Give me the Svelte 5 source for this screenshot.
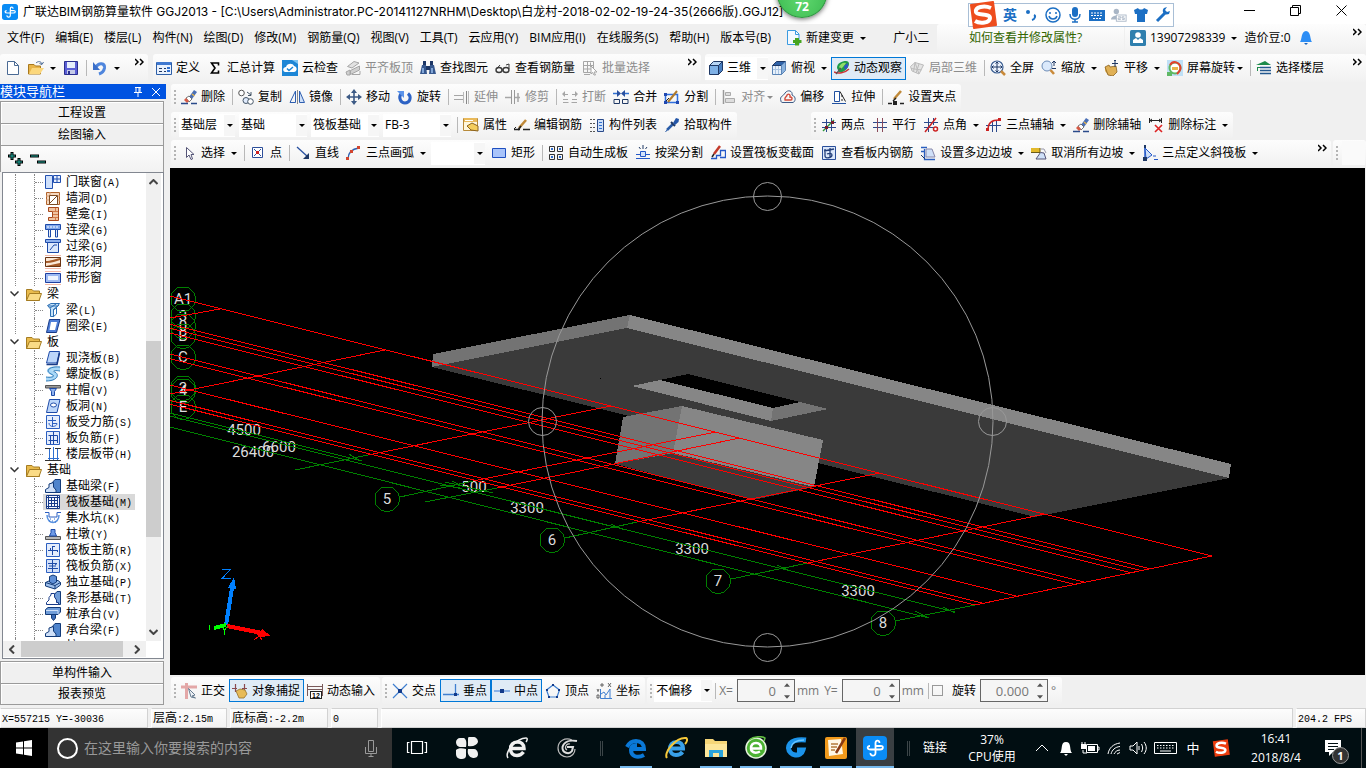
<script>
const menus = ['文件(F)', '编辑(E)', '楼层(L)', '构件(N)', '绘图(D)', '修改(M)', '钢筋量(Q)', '视图(V)', '工具(T)', '云应用(Y)', 'BIM应用(I)', '在线服务(S)', '帮助(H)', '版本号(B)']

// toolbar entries: icon, text, caret ('wide' | 'tight'), off = disabled, on = pressed
const sep = { sep: true }
const fileBar = [
  { icon: 'new', title: '新建' },
  { icon: 'open', title: '打开', caret: 'wide' },
  { icon: 'save', title: '保存' },
  sep,
  { icon: 'undo', title: '撤销', caret: 'wide' },
]
const mainBar = [
  { icon: 'define', text: '定义' },
  { icon: 'sum', text: '汇总计算' },
  { icon: 'cloud', text: '云检查' },
  { icon: 'alignTop', text: '平齐板顶', off: true },
  { icon: 'find', text: '查找图元' },
  { icon: 'glasses', text: '查看钢筋量' },
  { icon: 'batch', text: '批量选择', off: true },
]
const viewBar = [
  { icon: 'topView', text: '俯视', caret: 'wide' },
  { icon: 'orbit', text: '动态观察', on: true },
  { icon: 'part3d', text: '局部三维', off: true },
  sep,
  { icon: 'fit', text: '全屏' },
  { icon: 'zoom', text: '缩放', caret: 'wide' },
  { icon: 'pan', text: '平移', caret: 'wide' },
  { icon: 'spin', text: '屏幕旋转', caret: 'tight' },
  sep,
  { icon: 'floors', text: '选择楼层' },
]
const editBar = [
  { icon: 'brush', text: '删除' },
  sep,
  { icon: 'copy', text: '复制' },
  { icon: 'mirror', text: '镜像' },
  sep,
  { icon: 'move', text: '移动' },
  { icon: 'rotate', text: '旋转' },
  sep,
  { icon: 'extend', text: '延伸', off: true },
  { icon: 'trim', text: '修剪', off: true },
  sep,
  { icon: 'break', text: '打断', off: true },
  { icon: 'join', text: '合并' },
  { icon: 'split', text: '分割' },
  sep,
  { icon: 'align', text: '对齐', caret: 'tight', off: true },
  { icon: 'offset', text: '偏移' },
  { icon: 'stretch', text: '拉伸' },
  sep,
  { icon: 'grip', text: '设置夹点' },
]
const partCombos = [
  { label: '楼层', value: '基础层', width: 56 },
  { label: '构件类型', value: '基础', width: 68 },
  { label: '构件', value: '筏板基础', width: 68 },
  { label: '构件名称', value: 'FB-3', width: 68 },
]
const partBar = [
  sep,
  { icon: 'props', text: '属性' },
  { icon: 'editBar', text: '编辑钢筋' },
  { icon: 'list', text: '构件列表' },
  { icon: 'pick', text: '拾取构件' },
]
const axisBar = [
  { icon: 'twoPoint', text: '两点' },
  { icon: 'parallel', text: '平行' },
  { icon: 'angle', text: '点角', caret: 'wide' },
  { icon: 'axis3', text: '三点辅轴', caret: 'wide' },
  { icon: 'brush', text: '删除辅轴' },
  { icon: 'delDim', text: '删除标注', caret: 'wide' },
]
const drawBar = [
  { icon: 'pointer', text: '选择', caret: 'wide' },
  sep,
  { icon: 'point', text: '点' },
  sep,
  { icon: 'line', text: '直线' },
  { icon: 'arc', text: '三点画弧', caret: 'wide' },
]
const slabBar = [
  { icon: 'rect', text: '矩形' },
  sep,
  { icon: 'autoSlab', text: '自动生成板' },
  { icon: 'beamSplit', text: '按梁分割' },
  { icon: 'section', text: '设置筏板变截面' },
  { icon: 'viewBars', text: '查看板内钢筋' },
  { icon: 'slope', text: '设置多边边坡', caret: 'wide' },
  { icon: 'noSlope', text: '取消所有边坡', caret: 'wide' },
  { icon: 'tilt', text: '三点定义斜筏板', caret: 'wide' },
]
const modeBar = [
  { icon: 'ortho', text: '正交' },
  { icon: 'snap', text: '对象捕捉', on: true },
  { icon: 'dynInput', text: '动态输入' },
]
const snapBar = [
  { icon: 'cross', text: '交点' },
  { icon: 'perp', text: '垂点', on: true },
  { icon: 'mid', text: '中点', on: true },
  { icon: 'vertex', text: '顶点' },
  { icon: 'coord', text: '坐标' },
]

const tree = [
  { leaves: [['doorWin', '门联窗', 'A'], ['wallHole', '墙洞', 'D'], ['niche', '壁龛', 'I'], ['coupling', '连梁', 'G'], ['lintel', '过梁', 'G'], ['bandHole', '带形洞'], ['bandWin', '带形窗']] },
  { name: '梁', leaves: [['beam', '梁', 'L'], ['ring', '圈梁', 'E']] },
  { name: '板', leaves: [['slab', '现浇板', 'B'], ['spiral', '螺旋板', 'B'], ['cap', '柱帽', 'V'], ['slabHole', '板洞', 'N'], ['mainBars', '板受力筋', 'S'], ['negBars', '板负筋', 'F'], ['strip', '楼层板带', 'H']] },
  { name: '基础', leaves: [['foundBeam', '基础梁', 'F'], ['raft', '筏板基础', 'M'], ['pit', '集水坑', 'K'], ['pier', '柱墩', 'Y'], ['raftMain', '筏板主筋', 'R'], ['raftNeg', '筏板负筋', 'X'], ['isolated', '独立基础', 'P'], ['stripFound', '条形基础', 'T'], ['pileCap', '桩承台', 'V'], ['foundBeam', '承台梁', 'F'], ['pier', '桩', 'U']] },
]
let selected = $state('筏板基础')

// canvas geometry
const SLOPE = 0.2495
const longAxes = [[1212, 556], [1151, 569], [1143, 571], [1132, 573], [1084, 582], [1073, 584], [1016, 596], [982, 603], [975, 605]]
const crossAxes = [
  [220, 309, 170, 318], [385, 350, 170, 394], [611, 406, 368, 455], [716, 432, 473, 481],
  [740, 438, 497, 488], [880, 473, 637, 522], [1045, 514, 808, 563], [1212, 556, 975, 605],
]
const greenLines = [
  [368, 455, 295, 470], [473, 481, 400, 497], [497, 488, 425, 502], [637, 522, 565, 538],
  [808, 563, 731, 579], [975, 605, 895, 621], [170, 413, 362, 461], [170, 416, 955, 612],
  [170, 427, 929, 618], [445, 482, 493, 493], [349, 454, 360, 461], [440, 485, 460, 488], [452, 481, 464, 487],
  [611, 524, 624, 530], [777, 565, 790, 571], [943, 607, 955, 613], [915, 611, 929, 618],
]
const bubbles = [
  ['A1', 183, 299], ['3', 183, 316], ['0', 183, 326], ['B', 183, 336], ['C', 183, 357], ['2', 183, 388],
  ['4', 183, 391], ['E', 183, 407], ['5', 387, 499], ['6', 552, 540], ['7', 718, 581], ['8', 883, 623],
]
const dims = [['4500', 244, 430], ['6600', 279, 447], ['26400', 253, 452], ['500', 474, 487], ['3300', 527, 508], ['3300', 692, 549], ['3300', 858, 591]]
const handles = [[767, 196], [767, 647], [542, 421], [992, 421]]

function octagon(x, y) {
  const pts = []
  for (let i = 0; i < 12; i++) {
    const a = (i * Math.PI) / 6
    pts.push(`${Math.round(x + 12.5 * Math.sin(a))},${Math.round(y + 12.5 * Math.cos(a))}`)
  }
  return pts.join(' ')
}

const N = '#1f3864'
const B = '#2f6fd0'
const G = '#a6a6a6'
const s = (d, c = N, w = 1) => `<path d="${d}" fill="none" stroke="${c}" stroke-width="${w}"/>`
const f = (d, c) => `<path d="${d}" fill="${c}"/>`
const fs = (d, c, k) => `<path d="${d}" fill="${c}" stroke="${k}"/>`

const icons = {
  new: fs('M2.500 1.500H9.500L13.500 5.500V14.500H2.500Z', '#fff', '#4a6a94') + s('M9.500 1.500V5.500H13.500', '#4a6a94'),
  open: fs('M.5 4.500H6L7.500 6H12.500V14H.5Z', '#e8b54a', '#a8781c') + f('M1 14L4 8H16L12 14Z', '#fbd77c') + s('M8 3C10 1 13 1 14 4M15.500 2L14 4.500L11.500 3.500', '#4a6a94'),
  save: fs('M1.500 1.500H14.500V14.500H1.500Z', '#5b5fd6', '#2b2f8e') + f('M4 2H12V8H4Z', '#e6eefc') + f('M4 10H12V14H4Z', '#c5cbe8') + f('M5 11H7V14H5Z', '#2b2f8e'),
  undo: s('M4 7C7 2 13 3 12.500 8C12 11 10 13 7 14', '#4f86dd', 3) + f('M1 2V10H8Z', '#3b6fc9'),
  define: fs('M.5 2.500H15.500V14.500H.5Z', '#e9f1fd', '#2d5fa8') + f('M1 2H15V5H1Z', '#3f78d0') + s('M3 8.500H6M3 11.500H6M8 8.500H10M8 11.500H10', N) + f('M11 7H14V9H11ZM11 10H14V12H11Z', B),
  sum: s('M11.500 5.500V3H4.500L8 8L4.500 13H11.500V10.500', '#000', 1.600),
  cloud: f('M0 0H16V16H0Z', '#1d86d6') + f('M3 12C0 11 1 7 4 7C5 3 11 3 12 6C16 7 15 12 12 12Z', '#fff') + s('M5 8.500L7 10.500L11 7', '#1d86d6', 1.500) + f('M10 0H16V4Z', '#7cc4f2'),
  alignTop: fs('M2.500 6.500L9 1.500L14 3L7 8Z', '#e2e2e2', G) + fs('M5.500 10.500L14.500 6V10L5.500 14.500ZM1 12L5 10V15H2Z', '#d0d0d0', G) + s('M7 14.500H15V11', G),
  find: f('M2 5H6L7 14H0Z', '#36588f') + f('M10 5H14L16 14H9Z', '#36588f') + f('M3 1H6V5H3ZM10 1H13V5H10ZM6 6H10V10H6Z', '#1c3666') + s('M3 8V13M12 8V13', '#9cc0f0', 1.500),
  glasses: `<ellipse cx="4" cy="10" rx="3" ry="2.500" fill="none" stroke="#3a3a3a" stroke-width="1.400"/><ellipse cx="11" cy="10" rx="3" ry="2.500" fill="none" stroke="#3a3a3a" stroke-width="1.400"/>` + s('M7 10H8M1.500 9L5 5M14 9V4L11 5', '#3a3a3a'),
  batch: s('M1.500 1.500H11.500V12.500H1.500ZM1.500 5.500H11.500M1.500 9H11.500M5.500 1.500V12.500M8.500 2.500V7', G) + fs('M9 6L15 12L12 12L13.500 15L12 15L10.500 12.500L9 14Z', '#fff', G) + s('M2 14.500H8', G),
  cube: fs('M1.500 5.500H10.500V14.500H1.500Z', '#7fb1e6', N) + fs('M1.500 5.500L5.500 1.500H14.500L10.500 5.500Z', '#b8d6f5', N) + fs('M10.500 5.500L14.500 1.500V10.500L10.500 14.500Z', '#4a7fc0', N),
  topView: fs('M1.500 5.500H10.500V14.500H1.500Z', '#e8f1fb', '#5b84b5') + fs('M1.500 5.500L5.500 1.500H15L10.500 5.500Z', '#2f62a8', N) + fs('M10.500 5.500L14.500 1.500V10.500L10.500 14.500Z', '#8cb3de', '#5b84b5') + s('M4.500 6V14M7.500 6V14M2 9.500H10', '#a9c4e2'),
  orbit: f('M3 8C3 3 8 1 12 1C15 1 16 4 14 7C12 11 8 13 5 12Z', '#1d9a4a') + f('M5 7C6 4 9 2 12 3C11 5 9 7 7 9Z', '#8fdc6a') + f('M10 6L14 3V7L11 10Z', '#2f52c4') + s('M0 12C4 14 11 13 15 9', '#c33', 1.500) + s('M2 14L7 8', '#555', 1.200),
  part3d: fs('M1.500 6.500L6 2.500L14.500 5L10 14L3 11Z', '#e4e4e4', '#bbb') + s('M6 2.500L4.500 12M10 4L7 13M2 8.500L12.500 10M6 2.500L10 14', '#bbb'),
  fit: `<circle cx="7" cy="7" r="6" fill="#eef5ff" stroke="#3c5f92" stroke-width="1.200"/>` + s('M7 2V12M2 7H12M5.500 3.500L7 2L8.500 3.500M5.500 10.500L7 12L8.500 10.500M3.500 5.500L2 7L3.500 8.500M10.500 5.500L12 7L10.500 8.500', N) + s('M11 11L15 15', '#c98a3a', 2.500),
  zoom: `<circle cx="6" cy="6" r="5" fill="#dbe9fb" stroke="#6d8db8"/>` + s('M9.500 10L13 14', '#c98a3a', 2.500) + s('M13 1V6M11 3L13 1L15 3M11 8.500H15', N),
  pan: f('M1 7L5 5L6 7L12 6L13 12L9 16L4 15L1 11Z', '#e0b055') + s('M1 7L5 5L6 7L12 6L13 12L9 16L4 15Z', '#8a6220', .800) + s('M11 0V7M8 3.500H14M10 1L11 0L12 1', N),
  spin: f('M0 0H16V16H0Z', '#bfe0f6') + `<circle cx="8" cy="8" r="5.500" fill="#fff" stroke="#5fb865" stroke-width="2"/>` + s('M3 5C6 0 13 2 13.500 8C13.500 10 12 12 10 14', '#e2402c', 2) + f('M5 7H11V10H5Z', '#e8b54a') + f('M0 12H5V16H0Z', '#5fb865'),
  floors: f('M0 5L9 1L15 5Z', '#1c8a4a') + s('M4 7.500H15M4 10.500H15M4 13.500H15', '#23588f', 1.500) + s('M1.500 7.500H4M1.500 7V11', '#1c8a4a'),
  brush: f('M8 8L13 1L16 3L11 10Z', '#4a6fb5') + f('M5 9L8 7L11 10L8 13Z', '#fff') + s('M5 9L8 7L11 10L8 13Z', '#555', .800) + f('M5 9L8 12L6 14L3 11Z', '#d65a45') + s('M0 14.500H7M10 14.500H16', '#2a4a8a', 1.500) + s('M11 5L13.500 7', '#e8b54a', 1.500),
  copy: `<circle cx="3.500" cy="4" r="2.800" fill="#fff" stroke="#555"/><circle cx="8" cy="11.500" r="3" fill="#dfeafc" stroke="#456"/><circle cx="12.500" cy="12.500" r="2.800" fill="#fff" stroke="#456"/>` + s('M9 3L13 6M13 3V6.500H10', '#456'),
  mirror: s('M6.500 2V13.500H1Z', '#2f5fb0') + s('M8.500 1V15', '#888') + fs('M10.500 2V13.500H15.500Z', '#cfe0f8', '#2f5fb0'),
  move: s('M8 2V14M2 8H14', '#3c5a85', 1.600) + f('M8 0L11 4H5ZM8 16L11 12H5ZM0 8L4 5V11ZM16 8L12 5V11Z', '#3c5a85'),
  rotate: s('M4 5C1 9 4 14 8 14C13 14 15 8 11 4.500', '#2d62c4', 3) + f('M0 2H7V9Z', '#5b93ea'),
  extend: s('M0 6.500H9M0 10.500H9', G) + s('M12.500 2V15', '#888') + s('M9.500 3V14M14.500 2V15', '#bbb'),
  trim: s('M6.500 1V15M9.500 1V15', '#999') + s('M0 8.500H6M10 8.500H15M13 4V13', G, 1.500),
  break: s('M1 5.500H6M10 5.500H15M1 13.500H6.500M9.500 13.500H15M1 10.500H6M10 10.500H15', G, 1.200) + f('M3 2V8L0 5ZM13 2V8L16 5Z', G),
  join: s('M0 4.500H5M11 4.500H16', B, 1.500) + f('M4 1V8L8 4.500ZM12 1V8L8 4.500Z', '#2850a0') + s('M1 10.500H6.500V14.500H1ZM15 10.500H9.500V14.500H15Z', N),
  split: s('M1.500 5.500H13.500V13.500H1.500Z', '#2f6fe0', 1.500) + s('M4 13L13 2', '#b07a2a', 2) + s('M1 13L5 9', '#222') + f('M0 12H3V15H0ZM12 12H15V15H12ZM0 4H3V7H0Z', '#2048b0'),
  align: s('M2.500 1V15', '#999', 1.500) + fs('M4.500 3.500H9.500V6.500H4.500ZM4.500 9.500H13.500V13.500H4.500Z', '#ddd', '#aaa'),
  offset: s('M1 12C-1 7 4 7 5 4C8 0 13 2 12 6C17 8 15 13 13 13.500H3C1.500 13.500 1 13 1 12Z', '#3c5a85') + s('M5 11C4 8 7 8 7 6C9 4 10.500 6 10 8C13 8 12 11 11 11Z', '#d24a3a', 1.400),
  stretch: fs('M3.500 2.500H8.500V12.500H3.500Z', '#fff', '#2050a0') + s('M9 2.500L14.500 12.500', '#222') + s('M1 14.500H15', '#2050a0') + s('M11 6V8M11 10V12', '#222'),
  grip: s('M6 10L13 2', '#c08a3a', 2.500) + s('M5 12L8 9', '#222', 1.500) + s('M0 14.500H4M12 14.500H16', '#222', 1.500) + f('M5 12H9V16H5Z', '#222'),
  props: fs('M.5 1.500H14.500V13.500H.5Z', '#fff7dd', '#b78a3a') + f('M1 1H14V5H1Z', '#e9b95a') + s('M2 3.500H10', '#fff') + fs('M4 9L9 6L15 9V14L8 13Z', '#f4cd5c', '#8a6220'),
  editBar: s('M0 12.500H6M9 12.500H16', '#222', 1.500) + s('M5 11L12 3', '#c08a3a', 2.500) + s('M4 13L7 9', '#222', 1.500) + s('M2 10L0 12', '#222'),
  list: s('M1 2.500H3M1 6.500H3M1 10.500H3M1 14.500H3M4 2.500H6M4 6.500H6M4 10.500H6M4 14.500H6', '#555') + fs('M8.500 2.500H14.500V14.500H8.500Z', '#cfe0f8', '#2a4a8a') + s('M10 5.500H13M10 8.500H13M10 11.500H13', B),
  pick: s('M3 13L9 7', '#2a5ca8', 2.500) + s('M1.500 15L3 13', '#2a5ca8') + s('M7 5L11 9', N, 2) + f('M9 6L12 1L15 2L14.500 5L11 8Z', '#2456a8'),
  twoPoint: s('M1 5.500H15M1 10.500H15M5.500 2V15M10.500 1V14', '#2c4a8c') + s('M2 14L13 3', '#2f9a3a', 1.500) + f('M4 9H7V12H4ZM10 4H13V7H10Z', '#7a1f2a'),
  parallel: s('M1 5.500H15M1 10.500H15', '#2c4a8c', 1.200) + s('M5.500 1V15M10.500 1V15', '#8a4a5a'),
  angle: s('M1 5.500H15M1 10.500H15M5.500 1V15M10.500 1V8', '#2c4a8c') + s('M2 15L13 1', '#c22', 1.500) + `<circle cx="12.500" cy="12" r="2" fill="#fff" stroke="#c22" stroke-width="1.500"/>`,
  axis3: s('M6.500 4V15M10.500 3V15M0 8.500H15', '#2c4a8c') + s('M2 12C2 6 6 3 13 3', '#c22', 1.300) + f('M12 1H15V4H12ZM0 11H3V14H0Z', '#c22'),
  delDim: s('M1.500 1V6M13.500 1V6M2 3.500H13M4 2L2 3.500L4 5M11 2L13 3.500L11 5', '#222') + s('M7 8L14 15M14 8L7 15', '#d22', 1.600),
  pointer: fs('M5.500 2.500V12.500L8 10L10 14.500L11.500 14L10 9.500H13Z', '#fff', '#557'),
  point: fs('M2.500 2.500H12.500V12.500H2.500Z', '#fff', '#2d4f9a') + s('M4 4L11 11M11 4L4 11', '#2d4f9a') + f('M6 6H9V9H6Z', '#c22'),
  line: s('M2 2L13 12', '#2850a0', 1.300) + f('M14 14V8L8 14Z', N),
  arc: s('M2 14C2 8 6 4 13 3', '#3060b0', 1.300) + f('M11 1H14V4H11ZM4 5H7V8H4ZM0 12H3V15H0Z', '#d2452e'),
  rect: fs('M1.500 3.500H14.500V12.500H1.500Z', '#a9c4fa', '#1f4fc0'),
  autoSlab: s('M1.500 1.500H6.500V6.500H1.500ZM9.500 1.500H14.500V6.500H9.500ZM1.500 9.500H6.500V14.500H1.500ZM9.500 9.500H14.500V14.500H9.500Z', '#333') + f('M3 3H5V5H3ZM11 3H13V5H11ZM3 11H5V13H3ZM11 11H13V13H11Z', B),
  beamSplit: s('M1 9.500H5M11 9.500H15M1 13.500H15', '#2458c8', 1.200) + fs('M5.500 6.500H10.500V11.500H5.500Z', '#d3e2fa', '#2458c8') + s('M8 0V4M4 2L5.500 4M12 2L10.500 4', N),
  section: s('M1 13.500H6.500V10.500H10.500V5.500H15.500V12.500H10', '#2458c8', 1.300) + s('M4 9L10 1', '#c33a2a', 2.500) + s('M2 12L4 9', '#222', 1.500),
  viewBars: fs('M1.500 1.500H14.500V14.500H1.500Z', '#dce8fb', '#2a4f9a') + s('M4 4V11C4 14 11 13 11 10C11 8 8 8 6 9M3 6L13 4M9 3V12', '#233f7a', 1.300),
  slope: s('M1 6.500H5M4.500 4V14.500H15M1 2.500H7', '#2a5fc0', 1.300) + fs('M6 4L12 4L15 12H6Z', '#cfe0f8', '#88a') + s('M1 10L5 14', N),
  noSlope: f('M0 3H9V7H0Z', '#e2b92c') + s('M0 7.500H9V3', '#6a5a1a') + fs('M9.500 7.500L13 8L15 14H5Z', '#cfe0f8', '#557') + s('M10 4L13 4L15 8', '#99a'),
  tilt: s('M3 1V14', '#2458c8', 1.500) + fs('M3 3L10 10L4 14Z', '#cfe0f8', '#2458c8') + f('M1 12H5V16H1Z', N) + s('M11 11H14M12 14.500H16', '#2458c8', 1.200) + f('M2 0H4V3H2Z', N),
  ortho: s('M0 4H16M5.500 0V16', '#e3a7a7', 3) + fs('M7.500 5.500L14 12L11 13L14.500 15L10 14Z', '#eef2f7', '#667b90'),
  snap: s('M3.500 1V9M12.500 1V9M0 5.500H5M10 5.500H15', '#8a4a50', 1.200) + f('M4 8L8 6L13 7L15 11L12 15L7 15Z', '#e7bb58') + s('M4 8L8 6L13 7L15 11L12 15L7 15Z', '#94702a', .800),
  dynInput: s('M.5 1V13M15.500 1V13M1 3.500H15M1 6.500H15', '#7a5a5a') + `<rect x="3.500" y="8.500" width="11" height="7" fill="#fff" stroke="#222"/><text x="9" y="15" font-size="7" font-weight="700" text-anchor="middle" font-family="Liberation Sans, sans-serif">12</text>`,
  cross: s('M1 1L15 15M15 1L1 15', '#3f7fd0', 1.200) + f('M6 6H10V10H6Z', '#123a8a'),
  perp: s('M0 11.500H16M12.500 1V12', '#3f7fd0', 1.300) + f('M11 10H14V13H11Z', '#123a8a'),
  mid: s('M0 8H16', '#6f9fe0', 1.500) + f('M6 6H10V10H6Z', '#123a8a'),
  vertex: s('M8 2L14.500 7L12 14H4L1.500 7Z', '#3f7fd0', 1.200) + f('M7 1H9V3H7ZM13 6H15V8H13ZM1 6H3V8H1ZM3 13H5V15H3ZM11 13H13V15H11Z', '#123a8a'),
  coord: s('M4.500 6V15.500H16M5 11L8 9L10 12L14 6V15M9 12V15', '#3f7fd0') + s('M1 6L2 8L3 6M2 8V9M12 0L15 4M15 0L12 4M1 12H3V15H1ZM5 1H7V3H5Z', '#444', .800),
  folder: fs('M.5 3.500H6L7.500 5H13.500V14.500H.5Z', '#e9bb4d', '#a57c22') + fs('M.5 14.500L3.500 7.500H15.500L13 14.500Z', '#fadb86', '#a57c22'),
  doorWin: fs('M.5 1.500H7.500V14.500H.5Z', '#cfe0fb', '#2250b0') + fs('M8.500 1.500H15.500V8.500H8.500Z', '#e8f0fd', '#2250b0') + s('M12 1.500V8.500M8.500 5H15.500', '#2250b0'),
  wallHole: fs('M1.500 2.500H14.500V14.500H1.500Z', '#f6d9c0', '#b0622a') + s('M1 6H15M1 10H15M5 2V6M10 10V14', '#d69a70') + fs('M4.500 5.500H12.500V14.500H4.500Z', '#fff', '#7a4a22') + s('M4 14L12 6', '#7a4a22'),
  niche: fs('M3.500 1.500H13.500V14.500H3.500V11.500H7.500V5.500H3.500Z', '#f0c4a2', '#a8481c') + s('M8 5.500H13M10.500 2V5M8 8.500H13M8 11.500H13M10.500 12V14', '#d27a4a'),
  coupling: fs('M.5 2.500H15.500V7.500H.5Z', '#7fa6ea', '#1d4aa8') + fs('M3.500 7.500H5.500V15H3.500ZM10.500 7.500H12.500V15H10.500Z', '#e6effd', '#1d4aa8') + `<path d="M2 5H14" stroke="#fff" stroke-dasharray="2 1"/>`,
  lintel: fs('M.5 1.500H15.500V4.500H.5Z', '#8fb2ee', '#1d4aa8') + fs('M2.500 4.500H13.500V14.500H2.500Z', '#dbe8fc', '#1d4aa8') + s('M5 12L9 7H12', '#1d4aa8'),
  bandHole: s('M0 1.500H16M0 14.500H16', '#f3b8a8') + fs('M.5 3.500H15.500V12.500H.5Z', '#a65a28', '#6a3412') + f('M1 7C6 7 9 5 15 4H1ZM1 9C7 9 11 7 15 6L15 9L1 12Z', '#fbe9d8'),
  bandWin: s('M0 1.500H16M0 14.500H16', '#f3b8a8') + fs('M.5 3.500H15.500V12.500H.5Z', '#9db9f2', '#1d3fa0') + f('M3 6H13V10H3Z', '#eef4fe'),
  beam: fs('M2.500 3.500L6 1.500H14.500L11.500 5.500L8.500 8V14.500H5.500V7Z', '#c4e2fa', '#2c6fb4') + s('M3 4H12M5 6L11 2M8 8L14 3M11.500 6V12L8 15', '#2c6fb4'),
  ring: fs('M4.500 1.500H15L11.500 14.500H1.500Z', '#4f7fd8', '#173a88') + f('M6 4H12L10 12H4.500Z', '#fff'),
  slab: fs('M4.500 1.500H14.500L12 13H1.500Z', '#bcd6fa', '#1d4aa8') + s('M1.500 14.500H12L14.500 3', '#173a88', 1.500),
  spiral: s('M15 3C4 1 1 5 7 7C13 9 10 13 1 13', '#a9d8f7', 4) + s('M15 1C4 0 0 5 6 8C11 10 8 12 1 11M15 5C9 4 7 5 10 6C15 9 12 15 1 15', '#2d79b8'),
  cap: fs('M.5 3.500H15.500V6H.5Z', '#9a9a9a', '#555') + fs('M4.500 6.500H11.500L9.500 9.500V13.500H6.500V9.500Z', '#8fb2ee', '#1d4aa8'),
  slabHole: fs('M4.500 1.500H15L12 14.500H1.500Z', '#bcd6fa', '#1d4aa8') + `<ellipse cx="8.500" cy="7" rx="3" ry="2" fill="#fff" stroke="#1d4aa8"/>`,
  mainBars: fs('M1.500 1.500H14.500V14.500H1.500Z', '#e4edfc', '#2c5fc0') + s('M7.500 3V13M3 6.500H11M4 9C4 14 12 13 12 9.500H8', '#2c5fc0'),
  negBars: fs('M1.500 1.500H14.500V14.500H1.500Z', '#e4edfc', '#2c5fc0') + s('M3.500 5.500H12.500V13M3.500 10.500H12.500M5.500 5.500V14M8.500 2V14', '#1d4aa8'),
  strip: s('M0 2.500H6M10 2.500H16M0 14.500H16', '#333') + s('M4.500 3V14M8.500 1V14M12.500 3V14', B) + s('M3 12.500H14', B),
  foundBeam: fs('M6.500 5.500L10 1.500H15.500V14.500H6.500Z', '#4f84cc', '#123a78') + fs('M.5 14.500V11.500L4 9.500V6L8.500 4.500V9L11 12V14.500Z', '#cfe0f8', '#123a78'),
  raft: fs('M1.500 1.500H14.500V14.500H1.500Z', '#f4f8ff', '#173a88') + s('M3.500 1V15M12.500 1V15M1 3.500H15M1 12.500H15M6.500 4V12M9.500 4V12M4 6.500H12M4 9.500H12', '#173a88'),
  pit: s('M0 2.500H4V7H12V2.500H16', '#2c5fc0') + s('M2 5C2 15 14 15 14 5', '#5b93e0', 1.500) + s('M5 9H6M9 9H10M7 11H8M4 11H5M10 12H11', B),
  pier: fs('M.5 10.500H15.500V13.500H.5Z', '#b8b8b8', '#555') + fs('M4.500 10L6 6.500V3.500H10V6.500L11.500 10Z', '#6d9ae6', '#1d4aa8'),
  raftMain: fs('M1.500 1.500H14.500V14.500H1.500Z', '#e4edfc', '#2c5fc0') + s('M7.500 4V13M3 8.500H13M5.500 8V6M7 4.500H10M12.500 8V10', '#1d4aa8'),
  raftNeg: fs('M1.500 1.500H14.500V14.500H1.500Z', '#d3e1fa', '#2c5fc0') + s('M7.500 2V14M3 5.500H12L10 7M3 10.500H13M4 8H11', '#1d4aa8'),
  isolated: fs('M.5 8.500L5 6.500H13L15.500 8.500V11L10 15L.5 12Z', '#9fc0ec', '#123a78') + fs('M4.500 2.500L8 1L11.500 2.500V8L8 10L4.500 8Z', '#5f8fd6', '#123a78') + s('M.5 8.500L10 11.500L15.500 8.500M10 11.500V15', '#123a78'),
  stripFound: fs('M9 5L12 1.500H15.500V14.500H9Z', '#6f9cd8', '#123a78') + fs('M1.500 14.500V12.500L4 10V7.500L6 5V3.500H9.500V7L11.500 10V12.500H13.500V14.500Z', '#fff', '#173a88'),
  pileCap: fs('M.5 3.500L3 1.500H15.500V6L13 8.500H.5Z', '#6f9cd8', '#123a78') + s('M1 4.500H13V8', '#cfe0f8') + fs('M6.500 8.500H10.500V12L8.500 14.500L6.500 12Z', '#3c6cb8', '#123a78'),
  newChange: fs('M1.500 .5H9.500L13 4V14.500H1.500Z', '#f3f9ff', '#3a9be0') + s('M9.500 .5V4.500H13', '#3a9be0') + f('M9 8H13V10H15.500V13H13V15.500H9V13H7V10H9Z', '#46a520'),
  user: `<rect width="16" height="16" rx="1.500" fill="#2f7fae"/><circle cx="8" cy="5" r="2.800" fill="#fff"/>` + f('M3 13V10L6 8L8 10L10 8L13 10V13Z', '#fff'),
  bell: f('M2 12C4 10 3 1 8 1C13 1 12 10 14 12Z', '#2d8ef5') + f('M6 13H10L8 15Z', '#1864c0'),
  more: s('M0 1L3 4L0 7M5 1L8 4L5 7', '#000', 1.500),
}

const tasks = ['edge', 'ie', 'files', 'green', 'gblue', 'note']
const taskIcons = {
  view: s('M6.500 5.500H17.500V17.500H6.500ZM4.500 6.500H2.500V16.500H4.500M19.500 6.500H21.500V16.500H19.500', '#fff', 1.200),
  clover: f('M5 2H9C11 3 12 6 11 11H6C3 11 1 9 1 6C1 4 3 2 5 2ZM14 1H18C21 1 23 3 23 6C22 9 18 11 13 10V4C13 2 13 1 14 1ZM1 14C3 12 7 12 11 13V20C11 22 9 23 7 23C3 23 1 21 1 18ZM13 13H19C21 13 23 15 23 18C23 21 21 22 18 22C14 21 12 18 13 13Z', '#f0f0f0'),
  eWhite: s('M6 12.500H19C19 8 16 6 12.500 6C8 6 5.500 9 5.500 13C5.500 17 8 19.500 12 19.500C15 19.500 17 18 18.500 16', '#f0f0f0', 3.500) + s('M3 22C-1 16 12 2 21 2C23 2 22 5 21 6', '#f0f0f0', 1.500),
  gWhite: s('M17 4C10 1 3 5 3 12C3 18 8 21 12 21C17 21 20 17 20 13', '#bbb', 1.200) + s('M22 5C16 4 9 5 7.500 11C7 17 14 19 17 15L18 11H12', '#ddd', 2) + s('M15 8C11 7 9 12 12 14', '#ccc', 1.200),
  edge: s('M6 13H20C20 8 17 5 12 5C8 5 5 7 3 11', '#0a78d7', 4) + s('M20 19C13 23 7 20 7 14C7 10 10 9 13 9', '#0a78d7', 4),
  ie: s('M6 12.500H19C19 8 16 6 12.500 6C8 6 6 9 6 13C6 17 9 19 12 19C15 19 17 18 18.500 16', '#39a0e8', 4) + s('M3 22C-1 17 12 1 22 2C24 3 23 6 21 8', '#f5c83a', 2),
  files: f('M1 3H9L11 5H23V21H1Z', '#f6d678') + f('M1 8H23V21H1Z', '#fde69a') + f('M5 14H19V21H15V17H9V21H5Z', '#2aa4dc'),
  green: `<circle cx="12" cy="12" r="10" fill="#4cb233" stroke="#e8f5e0" stroke-width="1.500"/>` + s('M7 12.500H17C17 8 14 7 12 7C9 7 7 9 7 12.500C7 16 11 18 16 15.500', '#fff', 2.500) + s('M5 4C10 0 18 0 21 2L20 5', '#63c043', 1.500),
  gblue: s('M22 4C15 3 5 4 4.500 12C5 20 17 22 19 14H13', '#1b93ea', 5) + s('M20 4C14 4 8 6 7 12', '#69c4ff', 1.500),
  note: `<rect x="1" y="1" width="22" height="22" rx="2" fill="#f19a1c"/>` + f('M4 4L17 3L19 18L5 20Z', '#fff8e6') + s('M7 8H14M7 11H13M7 14H11', '#b47a3a', 1.500) + s('M12 17L21 2', '#8a3a12', 2.500),
  app: `<rect width="24" height="24" rx="4" fill="#0a8cf5"/>` + s('M12.500 11V17C12.500 21 7 20 7.500 17M12.500 13.500H8C3.500 13.500 4 10 7 10M12.500 13.500H17C21 13.500 20.500 9.500 17.500 10H12.500V7C12.500 4 16.500 3.500 16.500 7', '#fff', 1.800),
}
</script>

{#snippet icon(name)}
  <svg class="icon" viewBox="0 0 16 16" aria-hidden="true">{@html icons[name]}</svg>
{/snippet}

{#snippet big(name)}
  <svg class="big" viewBox="0 0 24 24" aria-hidden="true">{@html taskIcons[name]}</svg>
{/snippet}

{#snippet bar(items)}
  {#each items as item}
    {#if item.sep}
      <span class="sep"></span>
    {:else}
      <button class="tool" class:on={item.on} class:off={item.off} aria-label={item.text ?? item.title}>
        {@render icon(item.icon)}
        {#if item.text}<span class="text">{item.text}</span>{/if}
        {#if item.caret}<span class="caret {item.caret}"></span>{/if}
      </button>
    {/if}
  {/each}
{/snippet}

{#snippet combo(c)}
  <span class="combo" style="width: {c.width}px">
    {#if c.icon}{@render icon(c.icon)}{/if}
    <select aria-label={c.label}><option>{c.value}</option></select>
    <span class="drop"><span class="caret"></span></span>
  </span>
{/snippet}

{#snippet more()}
  <button class="more" aria-label="更多"><svg viewBox="0 0 9 8">{@html icons.more}</svg></button>
{/snippet}

{#snippet spin(id, value)}
  <span class="spin">
    <input {id} {value} />
    <svg viewBox="0 0 7 18" aria-hidden="true"><path d="M0 4L3.500 0L7 4ZM0 14L3.500 18L7 14Z" fill="#555" /></svg>
  </span>
{/snippet}

<div class="window">
  <header class="title">
    <svg class="icon" viewBox="0 0 24 24">{@html taskIcons.app}</svg>
    <h1>广联达BIM钢筋算量软件 GGJ2013 - [C:\Users\Administrator.PC-20141127NRHM\Desktop\白龙村-2018-02-02-19-24-35(2666版).GGJ12]</h1>
    <div class="winbtns">
      <button aria-label="最小化"><svg viewBox="0 0 11 11"><path d="M0 5.500H11" /></svg></button>
      <button aria-label="还原"><svg viewBox="0 0 11 11"><path d="M.5 2.500H8.500V10.500H.5ZM2.500 2.500V.5H10.500V8.500H8.500" /></svg></button>
      <button aria-label="关闭"><svg viewBox="0 0 11 11"><path d="M.5 .5L10.500 10.500M10.500 .5L.5 10.500" /></svg></button>
    </div>
    <div class="ball">72</div>
    <div class="ime">
      <svg class="sogou" viewBox="0 0 28 28"><path d="M2 4L24 1L27 24L5 27Z" fill="#ee4d1e" stroke="#ee4d1e" stroke-width="2" stroke-linejoin="round" /><path d="M22 7C15 4 6 6 7 11C8 15 21 12 21 17C21 22 11 23 6 20" fill="none" stroke="#fff" stroke-width="4" /></svg>
      <b>英</b>
      <svg viewBox="0 0 16 16"><circle cx="5" cy="5" r="2" fill="#1c6fc4" /><path d="M11 8C13 9 12 12 9 13" fill="none" stroke="#1c6fc4" stroke-width="2" /></svg>
      <svg viewBox="0 0 16 16"><circle cx="8" cy="8" r="7" fill="none" stroke="#1c6fc4" stroke-width="1.500" /><path d="M5 5V7M11 5V7M4 9C5 13 11 13 12 9" fill="none" stroke="#1c6fc4" stroke-width="1.500" /></svg>
      <svg viewBox="0 0 16 16"><rect x="5" y="0" width="6" height="10" rx="3" fill="#1c6fc4" /><path d="M3 7C3 14 13 14 13 7M8 12V15M5 15H11" fill="none" stroke="#1c6fc4" stroke-width="1.500" /></svg>
      <svg viewBox="0 0 16 16"><rect x="0" y="3" width="16" height="11" fill="#1c6fc4" /><path d="M2 6H14M2 8.500H14M4 11.500H12" stroke="#fff" stroke-dasharray="2 1" /></svg>
      <svg viewBox="0 0 18 16"><circle cx="6" cy="4" r="3" fill="#a9b6c6" /><path d="M0 13C0 8 11 7 11 11V13Z" fill="#a9b6c6" /><rect x="6" y="8" width="11" height="7" fill="#fff" stroke="#a9b6c6" /><path d="M8 10H11V11.500H8V13H11M15 10H12.500V11.500H15V13H12.500" fill="none" stroke="#a9b6c6" /></svg>
      <svg viewBox="0 0 16 16"><path d="M1 3L5 1C6 3 10 3 11 1L15 3L14 7H12V15H4V7H2Z" fill="#1c6fc4" /></svg>
      <svg viewBox="0 0 16 16"><path d="M2 14L10 6" stroke="#1c6fc4" stroke-width="3" /><path d="M9 1C6 4 9 9 14 7L15 4L12 5L10 3L12 0Z" fill="#1c6fc4" /></svg>
    </div>
  </header>

  <div class="menubar">
    <nav>
      {#each menus as m}<button class="menu">{m}</button>{/each}
      <button class="tool">{@render icon('newChange')}<span class="text">新建变更</span><span class="caret wide"></span></button>
      <button class="menu who">广小二</button>
    </nav>
    <div class="group tip"><a href="#help">如何查看并修改属性?</a></div>
    <div class="group grow">
      <button class="tool">{@render icon('user')}<span class="text">13907298339</span><span class="caret wide"></span></button>
      <button class="tool"><span class="text">造价豆:0</span></button>
      <button class="tool" aria-label="通知">{@render icon('bell')}</button>
      {@render more()}
    </div>
  </div>

  <div class="topbar">
    <div class="group files">{@render bar(fileBar)}{@render more()}</div>
    <div class="group mains">{@render bar(mainBar)}{@render more()}</div>
    <div class="group grow flush">
      {@render combo({ icon: 'cube', label: '视图', value: '三维', width: 63 })}
      {@render bar(viewBar)}{@render more()}
    </div>
  </div>

  <div class="body">
    <aside>
      <h2>模块导航栏
        <svg viewBox="0 0 10 10"><path d="M2 .5H8M3 .5V5.500M7 .5V5.500M6 1V5M1 5.500H9M5 6V10" /></svg>
        <svg viewBox="0 0 10 10"><path d="M1 1L9 9M9 1L1 9" /></svg>
      </h2>
      <button class="tab">工程设置</button>
      <button class="tab">绘图输入</button>
      <div class="fold">
        <button aria-label="全部展开"><svg viewBox="0 0 16 16"><path d="M5 1V9M1 5H9M12 7V15M8 11H16" stroke="#000" stroke-width="3" /><path d="M5 2V8M2 5H8M12 8V14M9 11H15" stroke="#1fa89a" /></svg></button>
        <button aria-label="全部折叠"><svg viewBox="0 0 16 16"><path d="M0 5H9M7 11H16" stroke="#000" stroke-width="3" /><path d="M1 5H8M8 11H15" stroke="#1fa89a" /></svg></button>
      </div>
      <div class="treebox">
        <ul class="tree">
          {#each tree as branch}
            {#if branch.name}
              <li class="branch">
                <svg class="chev" viewBox="0 0 9 6"><path d="M.5 .5L4.500 4.500L8.500 .5" fill="none" stroke="#333" stroke-width="1.500" /></svg>
                {@render icon('folder')}<span>{branch.name}</span>
              </li>
            {/if}
            {#each branch.leaves as [ico, name, key]}
              <li class="leaf">
                <span class="trunk"></span><span class="twig"></span>
                <button class:selected={selected === name} onclick={() => (selected = name)}>
                  {@render icon(ico)}<span>{name}{#if key}<span class="mono">({key})</span>{/if}</span>
                </button>
              </li>
            {/each}
          {/each}
        </ul>
        <div class="vscroll">
          <svg viewBox="0 0 9 6"><path d="M.5 5L4.500 1L8.500 5" /></svg>
          <span class="thumb"></span>
          <svg viewBox="0 0 9 6"><path d="M.5 1L4.500 5L8.500 1" /></svg>
        </div>
        <div class="hscroll">
          <svg viewBox="0 0 6 9"><path d="M5 .5L1 4.500L5 8.500" /></svg>
          <span class="thumb"></span>
          <svg viewBox="0 0 6 9"><path d="M1 .5L5 4.500L1 8.500" /></svg>
        </div>
      </div>
      <button class="tab">单构件输入</button>
      <button class="tab">报表预览</button>
    </aside>

    <main>
      <div class="row"><div class="group"><i class="grip"></i>{@render bar(editBar)}</div></div>
      <div class="row">
        <div class="group parts">
          <i class="grip"></i>
          <div class="combos">{#each partCombos as c}{@render combo(c)}{/each}</div>
          {@render bar(partBar)}
        </div>
        <div class="group"><i class="grip"></i>{@render bar(axisBar)}</div>
      </div>
      <div class="row">
        <div class="group grow">
          <i class="grip"></i>{@render bar(drawBar)}
          <div class="combos">{@render combo({ label: '绘图方式', value: '', width: 54 })}</div>
          {@render bar(slabBar)}{@render more()}
        </div>
        <div class="group stub"><i class="grip"></i><span></span></div>
      </div>

      <svg class="scene" viewBox="170 168 1195 507" preserveAspectRatio="xMidYMid slice">
        <g class="faces">
          <polygon points="432,367 627,328 1229,478 1035,517" fill="#3a3a3a" />
          <polygon points="433,354 630,315 627,328 432,367" fill="#737373" />
          <polygon points="630,315 1231,464 1229,478 627,328" fill="#868686" />
          <polygon points="688,374 800,402 773,408 660,380" fill="#000" />
          <polygon points="632,386 660,380 773,408 771,421" fill="#868686" />
          <polygon points="773,408 800,402 828,409 771,421" fill="#737373" />
          <polygon points="623,417 682,406 673,453 615,464" fill="#737373" />
          <polygon points="682,406 823,440 814,487 673,453" fill="#868686" />
          <polygon points="615,464 673,453 814,487 753,500" fill="#3a3a3a" />
          <rect x="600" y="378" width="1" height="1" fill="#000" />
        </g>
        <g class="labels">
          {#each bubbles as [t, x, y]}<text {x} y={y + 5}>{t}</text>{/each}
          {#each dims as [t, x, y]}<text {x} y={y + 5}>{t}</text>{/each}
        </g>
        <g class="green">
          {#each greenLines as [x1, y1, x2, y2]}<line {x1} {y1} {x2} {y2} />{/each}
          {#each bubbles as [, x, y]}<polygon points={octagon(x, y)} />{/each}
        </g>
        <g class="red">
          {#each longAxes as [x, y]}<line x1="170" y1={y - (x - 170) * SLOPE} x2={x} y2={y} />{/each}
          {#each crossAxes as [x1, y1, x2, y2]}<line {x1} {y1} {x2} {y2} />{/each}
        </g>
        <g class="orbit">
          <circle cx="767.500" cy="421.500" r="225.500" />
          {#each handles as [cx, cy]}<circle cx={cx + 0.5} cy={cy + 0.5} r="14" />{/each}
        </g>
        <g class="gizmo">
          <path d="M226 625L232 588" stroke="#0080ff" stroke-width="4" /><polygon points="228,588 236,589 234,577" fill="#0080ff" />
          <path d="M227 626L262 633" stroke="#f00" stroke-width="4" /><polygon points="262,629 271,636 259,637" fill="#f00" />
          <path d="M226 625L214 628" stroke="#0f0" stroke-width="4" />
          <path d="M222 569.500H230.500L222 578.500H231" stroke="#0080ff" />
          <path d="M254 640L263 633M257 633L262 640" stroke="#f00" />
          <path d="M221 626L224.500 630L228 626M224.500 630V635M209.500 625V630" stroke="#0f0" />
        </g>
      </svg>

      <div class="row bottom">
        <div class="group"><i class="grip"></i>{@render bar(modeBar)}</div>
        <div class="group"><i class="grip"></i>{@render bar(snapBar)}</div>
        <div class="group coords">
          <i class="grip"></i>
          {@render combo({ label: '偏移方式', value: '不偏移', width: 58 })}
          <span class="sep"></span>
          <label for="dx">X=</label>{@render spin('dx', '0')}<span class="unit">mm</span>
          <label for="dy">Y=</label>{@render spin('dy', '0')}<span class="unit">mm</span>
          <span class="sep"></span>
          <label class="check"><input type="checkbox" />旋转</label>
          {@render spin('rot', '0.000')}<span class="deg">°</span>
        </div>
      </div>
    </main>
  </div>

  <footer class="status">
    <span class="xy"><span class="mono">X=557215 Y=-30036</span></span>
    <span class="floor">层高<span class="mono">:2.15m</span></span>
    <span class="base">底标高<span class="mono">:-2.2m</span></span>
    <span class="count"><span class="mono">0</span></span>
    <span class="grow"></span>
    <span class="fps"><span class="mono">204.2 FPS</span></span>
  </footer>

  <div class="taskbar">
    <button class="start" aria-label="开始"><svg viewBox="0 0 16 16"><path d="M0 2.500L7 1.500V7.500H0ZM8 1.300L16 0V7.500H8ZM0 8.500H7V14.500L0 13.500ZM8 8.500H16V16L8 14.700Z" fill="#fff" /></svg></button>
    <div class="search">
      <span class="ring"></span>
      <input aria-label="搜索" placeholder="在这里输入你要搜索的内容" />
      <svg viewBox="0 0 12 17"><path d="M3.500 .5H8.500V11.500H3.500ZM.5 7V13.500H11.500V7M6 14V17M3.500 16.500H8.500" fill="none" stroke="#9a9a9a" /></svg>
    </div>
    <button class="task wide" aria-label="任务视图">{@render big('view')}</button>
    <button class="task wide" aria-label="启动">{@render big('clover')}</button>
    <button class="task wide" aria-label="浏览器">{@render big('eWhite')}</button>
    <button class="task wide" aria-label="广联达">{@render big('gWhite')}</button>
    <i class="bars"></i>
    {#each tasks as t}
      <button class="task" class:open={t !== 'ie'} aria-label={t}>{@render big(t)}</button>
    {/each}
    <button class="task open active" aria-label="GGJ2013">{@render big('app')}</button>
    <div class="tray">
      <i class="bars"></i>
      <span class="link">链接</span>
      <span class="cpu">37%<br />CPU使用</span>
      <svg class="t" viewBox="0 0 24 20"><path d="M6 13L12 7L18 13" class="o" /></svg>
      <svg class="t" viewBox="0 0 24 20"><path d="M6 15C9 12 6 4 12 4C18 4 15 12 18 15ZM10 16H14L12 18Z" fill="#fff" /></svg>
      <svg class="t" viewBox="0 0 24 20"><path d="M8.500 6.500H19.500V14.500H8.500ZM20 9H21V12H20M5 12V15H9" class="o" /><path d="M3 6H8V11H3ZM10 8H17V13H10Z" fill="#fff" /><path d="M4 4V6M7 4V6" class="o" /></svg>
      <svg class="t" viewBox="0 0 24 20"><path d="M6 16C7 10 11 6 18 5M9 16C10 12 13 9 18 8.500M12 16C13 14 15 12 18 12M15 16L18 14.500" class="o" /></svg>
      <svg class="t" viewBox="0 0 24 20"><path d="M4 8H7L11 4V16L7 12H4ZM13 8V12M15.500 6C17 9 17 11 15.500 14M18 4C21 8 21 12 18 16" class="o" /></svg>
      <svg class="k" viewBox="0 0 30 20"><path d="M4.500 4.500H26.500V15.500H4.500Z" class="o" /><path d="M7 7.500H25M7 10H25" stroke="#fff" stroke-dasharray="1.500 1.500" /><path d="M10 13H21" stroke="#fff" /></svg>
      <span class="zh">中</span>
      <svg class="k" viewBox="-7 -2 42 32"><path d="M2 4L24 1L27 24L5 27Z" fill="#ee3d0e" stroke="#ee3d0e" stroke-width="2" /><path d="M22 7C15 4 6 6 7 11C8 15 21 12 21 17C21 22 11 23 6 20" fill="none" stroke="#fff" stroke-width="4" /></svg>
      <span class="clock">16:41<br />2018/8/4</span>
      <button class="note" aria-label="通知中心">
        <svg viewBox="0 0 18 18"><path d="M1 1H17V13H9L5 17V13H1Z" fill="#fff" /><path d="M4 4.500H14M4 7.500H14M4 10.500H10" stroke="#010e12" /></svg>
        <span class="badge">1</span>
      </button>
    </div>
  </div>
</div>

<style>
  :global(body) {
    background: #f0f0f0;
    overflow: hidden;
  }
  .window {
    display: flex;
    flex-direction: column;
    height: 100vh;
    font: 12px/16px "Open Sans", "Noto Sans CJK SC", sans-serif;
    color: #000;
    background: #f0f0f0;
  }
  button, input, select {
    font: inherit;
    color: inherit;
    margin: 0;
    padding: 0;
    border: 0;
    background: none;
    border-radius: 0;
  }
  svg {
    display: block;
    flex: none;
  }
  .icon {
    width: 16px;
    height: 16px;
  }
  .mono {
    font: 10px/14px "Liberation Mono", monospace;
    white-space: pre;
  }
  .grow {
    flex: 1;
  }

  /* title bar */
  .title {
    position: relative;
    display: flex;
    align-items: center;
    height: 24px;
    flex: none;
    padding-left: 2px;
    background: #fff;
  }
  h1 {
    margin: 0 0 0 5px;
    font: 12px/16px Inter, "Noto Sans CJK SC", sans-serif;
    white-space: nowrap;
  }
  .winbtns {
    display: flex;
    margin-left: auto;
    align-self: flex-start;
    padding-right: 2px;
  }
  .winbtns button {
    width: 46px;
    height: 21px;
    display: grid;
    place-items: center;
  }
  .winbtns svg {
    width: 11px;
    height: 11px;
    fill: none;
    stroke: #000;
  }
  .ball {
    position: absolute;
    left: 777px;
    top: -30px;
    width: 48px;
    height: 46px;
    border: 1px solid #2f9440;
    border-radius: 50%;
    background: radial-gradient(circle at 50% 60%, #5fd86f, #35b44a);
    box-shadow: 0 1px 5px rgba(0, 0, 0, 0.6);
    color: #fff;
    font: bold 12px/72px "Open Sans", sans-serif;
    text-align: center;
  }
  .ime {
    position: absolute;
    left: 968px;
    top: 3px;
    width: 206px;
    height: 24px;
    box-sizing: border-box;
    display: flex;
    align-items: center;
    gap: 6px;
    border: 1px solid #a9bfd6;
    background: #fff;
    z-index: 2;
  }
  .ime b {
    font-size: 14px;
    color: #1c6fc4;
  }
  .ime svg {
    width: 16px;
    height: 16px;
  }
  .ime .sogou {
    width: 28px;
    height: 28px;
  }

  /* menus and toolbars */
  .menubar, .topbar {
    display: flex;
    height: 28px;
    flex: none;
    margin-bottom: 2px;
  }
  nav {
    display: flex;
    align-items: center;
    flex: 0 0 937px;
    white-space: nowrap;
  }
  .menu {
    padding: 0 4px 0 7px;
  }
  nav .tool {
    margin-left: 8px;
  }
  .who {
    margin-left: 16px;
  }
  .group {
    display: flex;
    align-items: center;
    padding-right: 1px;
    background: linear-gradient(#fdfdfd, #f1f1f1);
    border-radius: 3px;
  }
  .tip {
    flex: 0 0 187px;
    box-sizing: border-box;
    padding-left: 32px;
    margin-right: 1px;
  }
  .tip a {
    color: #360;
    text-decoration: none;
  }
  .menubar .grow {
    padding-left: 2px;
  }
  .topbar {
    gap: 5px;
  }
  .files {
    flex: 0 0 145px;
    padding-left: 2px;
  }
  .mains {
    flex: 0 0 547px;
    margin-right: -1px;
  }
  .flush {
    padding-left: 0;
  }
  .tool {
    display: flex;
    align-items: center;
    flex: none;
    height: 23px;
    border: 1px solid transparent;
    padding: 0 3px 0 2px;
    white-space: nowrap;
    box-sizing: border-box;
  }
  .tool .icon + .text {
    margin-left: 4px;
  }
  .on {
    border-color: #0078d7;
    background: #dfebf6;
  }
  .off {
    color: #8c8c8c;
  }
  .caret {
    border: 3px solid transparent;
    border-top-color: #000;
    border-bottom: 0;
  }
  .off .caret {
    border-top-color: #8c8c8c;
  }
  .wide.caret {
    margin-left: 6px;
  }
  .tight {
    margin-left: 2px;
  }
  .sep {
    flex: none;
    width: 1px;
    height: 16px;
    margin: 0 2px 0 3px;
    background: #b8b8b8;
  }
  .more {
    align-self: flex-start;
    margin: 4px 3px 0 auto;
  }
  .more svg {
    width: 9px;
    height: 8px;
  }
  .grip {
    flex: none;
    width: 2px;
    height: 14px;
    margin: 0 2px 0 3px;
    background: repeating-linear-gradient(#b4b4b4 0 2px, transparent 2px 4px);
  }
  .combo {
    display: flex;
    align-items: center;
    flex: none;
    height: 23px;
    background: #fff;
  }
  .combo .icon {
    margin: 0 1px 0 3px;
  }
  select {
    appearance: none;
    flex: 1;
    min-width: 0;
    padding-left: 2px;
    height: 20px;
  }
  .drop {
    display: grid;
    place-items: center;
    width: 11px;
    height: 21px;
    background: #f6f6f6;
  }
  .combos {
    display: flex;
    gap: 4px;
    margin: 0 3px 0 1px;
  }

  /* body */
  .body {
    display: flex;
    gap: 4px;
    flex: 1;
    min-height: 0;
  }
  aside {
    display: flex;
    flex-direction: column;
    width: 166px;
    flex: none;
    padding-bottom: 1px;
    box-sizing: border-box;
  }
  h2 {
    display: flex;
    align-items: center;
    gap: 8px;
    height: 15px;
    margin: 0 0 2px;
    padding-right: 5px;
    background: #0053e1;
    color: #fff;
    font-size: 13px;
    font-weight: 400;
    line-height: 15px;
  }
  h2 svg {
    width: 10px;
    height: 10px;
    fill: none;
    stroke: #fff;
  }
  h2 svg:first-of-type {
    margin-left: auto;
  }
  .tab {
    flex: none;
    height: 22px;
    margin-right: 2px;
    border: 1px solid #9a9a9a;
    border-bottom-width: 0;
    box-shadow: inset 1px 1px #fff;
  }
  .tab:last-child {
    border-bottom-width: 1px;
  }
  .fold {
    display: flex;
    gap: 7px;
    align-items: center;
    flex: none;
    height: 26px;
    margin-right: 2px;
    padding-left: 6px;
    border: 1px solid #9a9a9a;
    border-bottom: 0;
    background: linear-gradient(#fcfcfc, #f2f2f2);
  }
  .fold svg {
    width: 16px;
    height: 16px;
  }
  .treebox {
    display: grid;
    grid-template: 1fr 16px / 1fr 15px;
    flex: 1;
    min-height: 0;
    margin: 0 2px 2px;
    padding: 0 2px 1px 0;
    border: 1px solid #828790;
    background: #fff;
  }
  .tree {
    margin: 0;
    padding: 1px 0 0;
    list-style: none;
    overflow: hidden;
    min-height: 0;
  }
  li {
    display: flex;
    height: 16px;
    align-items: center;
    white-space: nowrap;
  }
  .chev {
    width: 9px;
    height: 6px;
    margin: 0 7px;
  }
  .branch .icon {
    margin-right: 5px;
  }
  .trunk {
    width: 18px;
    height: 16px;
    margin-left: 12px;
    border-left: 1px dotted #888;
  }
  .twig {
    width: 8px;
    height: 16px;
    border-left: 1px dotted #888;
  }
  .twig::before {
    content: "";
    display: block;
    height: 8px;
    border-bottom: 1px dotted #888;
  }
  .leaf button {
    display: flex;
    align-items: center;
    gap: 5px;
    height: 16px;
    padding: 0 3px 0 2px;
  }
  .leaf button.selected {
    background: #d9d9d9;
  }
  .vscroll, .hscroll {
    display: flex;
    align-items: center;
    justify-content: space-between;
    background: #f0f0f0;
  }
  .vscroll {
    flex-direction: column;
    padding: 6px 0;
  }
  .vscroll svg {
    width: 9px;
    height: 6px;
  }
  .hscroll svg {
    width: 6px;
    height: 9px;
  }
  .vscroll path, .hscroll path {
    fill: none;
    stroke: #444;
    stroke-width: 2;
  }
  .vscroll .thumb {
    width: 15px;
    height: 43%;
    margin-top: auto;
    margin-bottom: 92px;
    background: #cdcdcd;
  }
  .hscroll {
    padding: 0 6px;
  }
  .hscroll .thumb {
    width: 102px;
    height: 16px;
    margin-right: 6px;
    background: #cdcdcd;
  }
  main {
    display: flex;
    flex-direction: column;
    flex: 1;
    min-width: 0;
  }
  .row {
    display: flex;
    height: 26px;
    flex: none;
    margin: 0 0 2px 1px;
  }
  .parts {
    margin-right: 74px;
  }
  .stub {
    gap: 2px;
    margin-left: 2px;
  }
  .stub span {
    width: 23px;
    height: 24px;
    background: #fafafa;
  }
  .scene {
    flex: 1;
    min-height: 0;
    width: calc(100% - 1px);
    background: #000;
  }
  .faces, .green, .red {
    shape-rendering: crispEdges;
  }
  .green, .red, .orbit {
    fill: none;
  }
  .green {
    stroke: #008000;
  }
  .red {
    stroke: #f00;
  }
  .orbit {
    stroke: #999;
  }
  .gizmo {
    fill: none;
    shape-rendering: crispEdges;
  }
  .labels {
    fill: #dcdcdc;
    font: 15px Roboto, sans-serif;
    text-anchor: middle;
  }
  .bottom {
    height: 27px;
    margin: 2px 0 2px 1px;
    gap: 2px;
  }
  .coords label, .unit, .deg {
    color: #777;
  }
  .coords label:not(.check) {
    margin: 0 4px 0 1px;
  }
  .unit {
    margin: 0 4px 0 2px;
  }
  .unit + .sep {
    margin-left: 0;
  }
  .deg {
    margin: 0 5px 0 3px;
  }
  .coords .check {
    display: flex;
    align-items: center;
    gap: 9px;
    margin: 0 4px 0 1px;
    color: #000;
  }
  .check input {
    appearance: none;
    width: 11px;
    height: 11px;
    border: 1px solid #999;
  }
  .spin {
    display: flex;
    align-items: center;
    height: 23px;
    box-sizing: border-box;
    padding-right: 4px;
    border: 1px solid #666;
    background: #f5f5f5;
  }
  .spin input {
    width: 38px;
    margin-right: 8px;
    text-align: right;
    font-size: 13px;
    color: #777;
  }
  .check + .spin input {
    width: 48px;
  }
  .spin svg {
    width: 6px;
    height: 16px;
  }

  /* status bar */
  .status {
    display: flex;
    gap: 3px;
    height: 20px;
    flex: none;
    margin-top: 2px;
  }
  .status > span {
    box-sizing: border-box;
    padding-left: 1px;
    border: 1px solid #d2d2d2;
    border-left-color: #fff;
    background: linear-gradient(#fdfdfd, #f2f2f2);
    white-space: nowrap;
    line-height: 17px;
  }
  .xy { width: 148px; }
  .floor { width: 76px; }
  .base { width: 98px; }
  .count { width: 47px; }
  .fps { width: 70px; }

  /* taskbar */
  .taskbar {
    display: flex;
    align-items: stretch;
    height: 40px;
    flex: none;
    background: #010e12;
    color: #fff;
  }
  .start, .task {
    display: grid;
    place-items: center;
    box-sizing: border-box;
  }
  .start {
    width: 48px;
    background: #000;
  }
  .start svg {
    width: 16px;
    height: 16px;
  }
  .search {
    display: flex;
    align-items: center;
    gap: 6px;
    flex: 0 0 344px;
    box-sizing: border-box;
    padding: 0 15px 0 9px;
    background: #333;
  }
  .ring {
    width: 17px;
    height: 17px;
    border: 2px solid #fff;
    border-radius: 50%;
  }
  .search input {
    flex: 1;
    min-width: 0;
    font-size: 14px;
    line-height: 20px;
  }
  .search input::placeholder {
    color: #999;
    opacity: 1;
  }
  .search svg {
    width: 12px;
    height: 17px;
  }
  .task {
    width: 40px;
    padding-top: 2px;
    border-bottom: 2px solid transparent;
  }
  .task.wide {
    width: 50px;
  }
  .big {
    width: 24px;
    height: 24px;
  }
  .task.open {
    background: linear-gradient(#76b9ed, #76b9ed) center bottom / 32px 2px no-repeat border-box;
  }
  .task.active {
    width: 38px;
    background: #3a3f42;
    border-bottom-color: #76b9ed;
  }
  .bars {
    align-self: center;
    width: 1px;
    height: 15px;
    margin: 0 13px 0 8px;
    border: 1px solid #3c4548;
    border-width: 0 1px;
  }
  .tray {
    display: flex;
    align-items: center;
    margin-left: auto;
    text-align: center;
  }
  .link {
    margin-right: 15px;
  }
  .cpu {
    width: 60px;
    margin-right: 8px;
    line-height: 17px;
  }
  .t {
    width: 24px;
    height: 20px;
  }
  .k {
    width: 30px;
    height: 20px;
  }
  .o {
    fill: none;
    stroke: #fff;
  }
  .zh {
    width: 26px;
    font-size: 13px;
  }
  .clock {
    width: 60px;
    margin: 0 18px 0 10px;
    line-height: 19px;
  }
  .note {
    position: relative;
    width: 38px;
    height: 40px;
    padding-right: 20px;
    margin-right: 4px;
    border-right: 1px solid #555;
  }
  .note svg {
    width: 18px;
    height: 18px;
  }
  .badge {
    position: absolute;
    left: 8px;
    top: 19px;
    width: 15px;
    height: 15px;
    border: 1px solid #999;
    border-radius: 50%;
    background: #333;
    font: bold 11px/15px "Open Sans", sans-serif;
    color: #fff;
  }
</style>
